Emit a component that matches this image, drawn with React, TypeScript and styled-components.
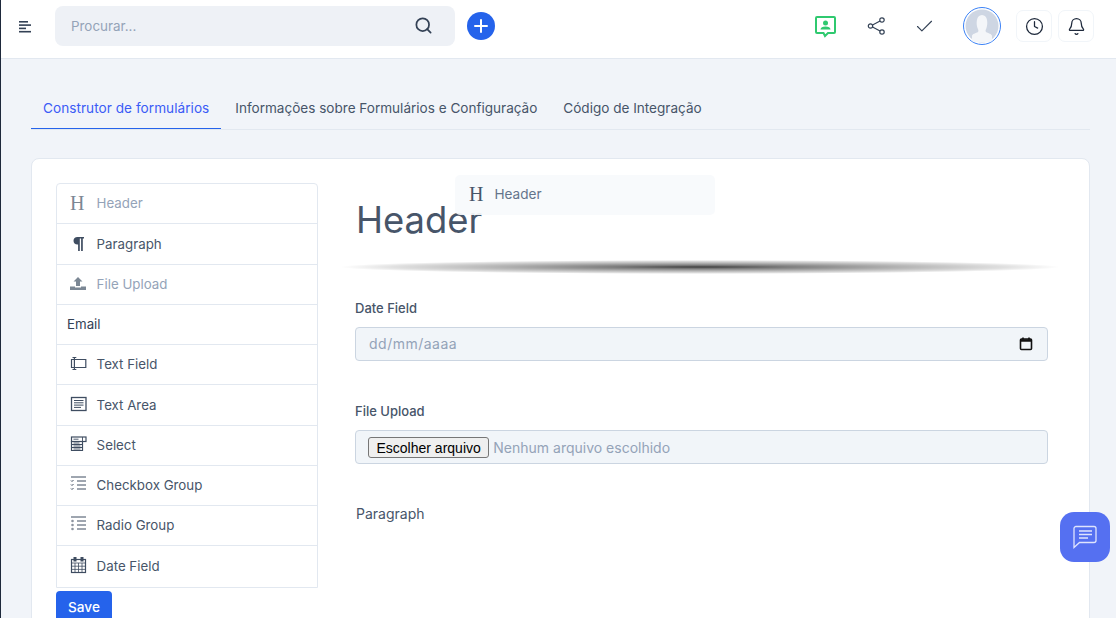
import React from 'react';
import styled, { createGlobalStyle } from 'styled-components';
import { Search, Clock, Bell, Check } from 'lucide-react';

const GlobalStyle = createGlobalStyle`
  html, body, #root { margin: 0; padding: 0; height: 100%; }
  body { font-family: 'Inter', 'Liberation Sans', sans-serif; overflow: hidden; background: #f1f4f9; }
  * { box-sizing: border-box; }
`;

const Shell = styled.div`
  position: relative;
  height: 618px;
  overflow: hidden;
  border-left: 1px solid #1e293b;
  background: #f1f4f9;
`;

const TopBar = styled.header`
  height: 59px;
  display: flex;
  align-items: flex-start;
  background: #fff;
  border-bottom: 1px solid #e2e8f0;
`;

const MenuButton = styled.div`
  width: 54px;
  height: 54px;
  display: flex;
  align-items: center;
  padding-left: 18px;
`;

const SearchBox = styled.div`
  width: 400px;
  height: 40px;
  margin-top: 6px;
  padding: 0 22px 1px 16px;
  display: flex;
  align-items: center;
  justify-content: space-between;
  background: #eef1f6;
  border-radius: 8px;
  font-size: 13.4px;
  color: #94a3b8;
  svg { color: #334155; }
`;

const PlusButton = styled.div`
  width: 28px;
  height: 28px;
  margin: 12px 0 0 12px;
  border-radius: 50%;
  background: #2563eb;
  display: flex;
  align-items: center;
  justify-content: center;
`;

const TopActions = styled.div`
  margin-left: auto;
  display: flex;
  align-items: flex-start;
  padding-right: 22px;
`;

const ActionIcon = styled.div<{ $width: number }>`
  width: ${p => p.$width}px;
  height: 52px;
  display: flex;
  align-items: center;
  justify-content: center;
  color: #334155;
`;

const Avatar = styled.div`
  width: 38px;
  height: 38px;
  margin: 7px 15px 0 13px;
  border-radius: 50%;
  border: 1px solid #3b82f6;
  background: #fff;
  padding: 1px;
  overflow: hidden;
  svg { display: block; }
`;

const ButtonGroup = styled.div`
  display: flex;
  gap: 6px;
  margin-top: 10px;
`;

const SquareButton = styled.div`
  width: 36px;
  height: 32px;
  border: 1px solid #f1f5f9;
  border-radius: 7px;
  background: #fff;
  display: flex;
  align-items: center;
  justify-content: center;
  color: #1e293b;
`;

const Content = styled.main`
  padding: 29px 26px 0 30px;
`;

const Tabs = styled.nav`
  display: flex;
  gap: 2px;
  height: 42px;
  border-bottom: 1px solid #e2e8f0;
`;

const Tab = styled.div<{ $active?: boolean }>`
  height: 41px;
  padding: 0 12px 1px;
  display: flex;
  align-items: center;
  font-size: ${p => (p.$active ? '13.6px' : '13.56px')};
  white-space: nowrap;
  letter-spacing: ${p => (p.$active ? '0.04px' : '0')};
  color: ${p => (p.$active ? '#3b5bf6' : '#475569')};
  border-bottom: 1px solid ${p => (p.$active ? '#2563eb' : 'transparent')};
`;

const Card = styled.section`
  margin-top: 28px;
  padding: 24px 41px 24px 24px;
  display: flex;
  gap: 37px;
  background: #fff;
  border: 1px solid #e2e8f0;
  border-radius: 8px;
  height: 520px;
`;

const Palette = styled.div`
  width: 262px;
  flex: none;
`;

const FieldList = styled.ul`
  list-style: none;
  margin: 0 0 3px;
  padding: 0;
  border: 1px solid #e2e8f0;
  border-radius: 4px 4px 0 0;
`;

const FieldRow = styled.li<{ $muted?: boolean }>`
  height: 40.25px;
  display: flex;
  align-items: center;
  padding: 0 0 0.4px 10px;
  font-size: 13.3px;
  color: ${p => (p.$muted ? '#94a3b8' : '#475569')};
  border-bottom: 1px solid #e2e8f0;
  &:last-child { border-bottom: 0; }
`;

const PlainLabel = styled.span`
  color: #334155;
`;

const IconSlot = styled.span<{ $muted?: boolean }>`
  width: 29.6px;
  height: 18px;
  flex: none;
  display: flex;
  align-items: center;
  padding-left: 3px;
  color: ${p => (p.$muted ? '#7b8794' : '#3f4d61')};
`;

const LetterIcon = styled.span`
  font-family: 'Liberation Serif', serif;
  font-size: 20px;
  line-height: 20px;
`;

const SaveButton = styled.button`
  display: block;
  width: 56px;
  height: 32px;
  border: 0;
  padding: 0;
  border-radius: 4px;
  background: #2563eb;
  color: #fff;
  font: 500 13.6px 'Inter', sans-serif;
`;

const Preview = styled.div`
  flex: 1;
  min-width: 0;
`;

const Heading = styled.h1`
  margin: 15px 0 0;
  padding-left: 1px;
  font-size: 36.4px;
  line-height: 44px;
  font-weight: 400;
  color: #475569;
`;

const Divider = styled.div`
  height: 14px;
  margin: 18px -12px 0 -15px;
  background: radial-gradient(
    ellipse closest-side,
    rgba(0, 0, 0, 0.75) 0%,
    rgba(0, 0, 0, 0.5) 25%,
    rgba(0, 0, 0, 0.3) 55%,
    rgba(0, 0, 0, 0.12) 85%,
    rgba(0, 0, 0, 0) 100%
  );
`;

const FieldLabel = styled.div<{ $top: number }>`
  margin-top: ${p => p.$top}px;
  font-size: 13px;
  line-height: 20px;
  font-weight: 500;
  color: #475569;
`;

const FieldBox = styled.div`
  height: 34px;
  margin-top: 9px;
  border: 1px solid #cbd5e1;
  border-radius: 4px;
  background: #f1f5f9;
  display: flex;
  align-items: center;
  font-size: 14px;
  color: #94a3b8;
`;

const DateBox = styled(FieldBox)`
  justify-content: space-between;
  padding: 0 14px 1px 13px;
  letter-spacing: 0.5px;
`;

const FileBox = styled(FieldBox)`
  padding-left: 12px;
  gap: 4px;
`;

const FakeFileButton = styled.span`
  height: 21px;
  padding: 1px 7.5px 0;
  display: flex;
  align-items: center;
  border: 1px solid #767676;
  border-radius: 3px;
  background: #efefef;
  color: #000;
  font: 14px 'Liberation Sans', sans-serif;
`;

const ParagraphText = styled.p`
  margin: 40px 0 0;
  padding-left: 1px;
  font-size: 14px;
  line-height: 20px;
  color: #475569;
`;

const DragGhost = styled.div`
  position: absolute;
  left: 454px;
  top: 175px;
  width: 260px;
  height: 40px;
  padding: 0 0 3px 14px;
  display: flex;
  align-items: center;
  gap: 11px;
  border-radius: 5px;
  background: rgba(248, 250, 252, 0.93);
  font-size: 13.6px;
  color: #64748b;
`;

const GhostLetter = styled(LetterIcon)`
  color: #475569;
`;

const ChatBubble = styled.div`
  position: absolute;
  left: 1059px;
  top: 512px;
  width: 50px;
  height: 50px;
  border-radius: 14px;
  background: #5570f1;
  display: flex;
  align-items: center;
  justify-content: center;
`;

type FieldItem = { label: string; icon?: React.ReactNode; muted?: boolean };

const strokeIcon = { width: 18, height: 18, viewBox: '0 0 18 18', fill: 'none', stroke: 'currentColor', strokeWidth: 1 };

const fields: FieldItem[] = [
  { label: 'Header', muted: true, icon: <LetterIcon>H</LetterIcon> },
  {
    label: 'Paragraph',
    icon: (
      <svg width="18" height="18" viewBox="0 0 18 18" fill="currentColor">
        <path d="M7.500 2H14v1.500h-1.200V16h-1.700V3.500H9.800V16H8.100V9.500H7.500C5 9.500 3.500 8 3.500 5.800S5 2 7.500 2z" />
      </svg>
    ),
  },
  {
    label: 'File Upload',
    muted: true,
    icon: (
      <svg width="18" height="18" viewBox="0 0 18 18" fill="currentColor">
        <path d="M8 2l4.500 4.500H10V11H6V6.500H3.500zM0 11.500h5v1h6v-1h5V15H0z" />
      </svg>
    ),
  },
  { label: 'Email' },
  {
    label: 'Text Field',
    icon: (
      <svg {...strokeIcon}>
        <path d="M4 4.500H1.500v8H4M4.800 4.500h11v8h-11M4.400 2.500v12M2.500 2.500h3.800M2.500 14.500h3.800" strokeWidth="1.200" />
      </svg>
    ),
  },
  {
    label: 'Text Area',
    icon: (
      <svg {...strokeIcon}>
        <rect x="1.500" y="1.500" width="14.500" height="13" strokeWidth="1.300" />
        <path d="M4 4.500h9.500M4 6.800h9.500M4 9.100h9.500M4 11.400h7" />
      </svg>
    ),
  },
  {
    label: 'Select',
    icon: (
      <svg {...strokeIcon}>
        <path d="M1.500 5.500h11v9h-11zM1.500 8.500h11M1.500 11.500h11" strokeWidth="1.200" />
        <rect x="1.500" y="1" width="14.500" height="4.500" strokeWidth="1.200" />
        <path d="M3.500 3.200h5M3.500 7h6M3.500 10h7M3.500 13h7M12.500 1v4.500" strokeWidth=".9" />
      </svg>
    ),
  },
  {
    label: 'Checkbox Group',
    icon: (
      <svg {...strokeIcon}>
        <path d="M1 1h15M7 5h9M7 9h9M7 13h9M1 4.500l1 1 1.500-1.500M1 8.500l1 1 1.500-1.500M1 12.500l1 1 1.500-1.500" />
      </svg>
    ),
  },
  {
    label: 'Radio Group',
    icon: (
      <svg {...strokeIcon}>
        <path d="M1 1h15M7 5h9M7 9h9M7 13h9" />
        <circle cx="2.500" cy="5" r="1.300" fill="currentColor" fillOpacity=".6" stroke="none" />
        <circle cx="2.500" cy="9" r="1.300" fill="currentColor" fillOpacity=".6" stroke="none" />
        <circle cx="2.500" cy="13" r="1.300" fill="currentColor" fillOpacity=".6" stroke="none" />
      </svg>
    ),
  },
  {
    label: 'Date Field',
    icon: (
      <svg {...strokeIcon}>
        <rect x="1.500" y="2.500" width="14" height="13" strokeWidth="1.200" />
        <path d="M1.500 6h14M1.500 9.200h14M1.500 12.400h14M5 6v9.500M8.500 6v9.500M12 6v9.500" strokeWidth=".8" />
        <rect x="4" y="0.500" width="2" height="3.500" fill="currentColor" />
        <rect x="11" y="0.500" width="2" height="3.500" fill="currentColor" />
      </svg>
    ),
  },
];

const App: React.FC = () => (
  <>
    <GlobalStyle />
    <Shell>
      <TopBar>
        <MenuButton>
          <svg width="13" height="12" viewBox="0 0 13 12" fill="#334155">
            <rect y="0" width="9" height="1.600" />
            <rect y="3.300" width="12" height="1.600" />
            <rect y="6.600" width="7" height="1.600" />
            <rect y="9.900" width="12" height="1.600" />
          </svg>
        </MenuButton>
        <SearchBox>
          Procurar...
          <Search size={19} strokeWidth={2.2} />
        </SearchBox>
        <PlusButton>
          <svg width="14" height="14" viewBox="0 0 14 14" stroke="#fff" strokeWidth="2" strokeLinecap="round">
            <path d="M7 1v12M1 7h12" />
          </svg>
        </PlusButton>
        <TopActions>
          <ActionIcon $width={58}>
            <svg width="22" height="24" viewBox="0 0 22 24" fill="none">
              <path d="M3 3h17a1 1 0 0 1 1 1v14a1 1 0 0 1-1 1h-6l-3 3-1.500-3H3a1 1 0 0 1-1-1V4a1 1 0 0 1 1-1z" stroke="#2fc96f" strokeWidth="2" />
              <circle cx="11.500" cy="9" r="2.500" fill="#2fc96f" />
              <path d="M6.500 15.500c0-2 2-3 5-3s5 1 5 3z" fill="#2fc96f" />
            </svg>
          </ActionIcon>
          <ActionIcon $width={44}>
            <svg width="18" height="18" viewBox="0 0 18 18" fill="none" stroke="currentColor" strokeWidth="1.200">
              <circle cx="3.500" cy="9" r="2.200" />
              <circle cx="15" cy="3" r="2.200" />
              <circle cx="15" cy="15" r="2.200" />
              <path d="M5.500 8l7.600-4M5.500 10l7.600 4" />
            </svg>
          </ActionIcon>
          <ActionIcon $width={52}>
            <Check size={21} strokeWidth={1.300} />
          </ActionIcon>
          <Avatar>
            <svg width="34" height="34" viewBox="0 0 34 34">
              <circle cx="17" cy="17" r="16.500" fill="#ced6e3" />
              <path d="M7 33v-6c0-2 4-3 6-4 1-1 0-3-.5-4-1.500-4-1.500-13 4.500-13s6 9 4.500 13c-.5 1-1.500 3-.5 4 2 1 6 2 6 4v6z" fill="#f4f6f9" />
            </svg>
          </Avatar>
          <ButtonGroup>
            <SquareButton>
              <Clock size={19} strokeWidth={1.600} />
            </SquareButton>
            <SquareButton>
              <Bell size={19} strokeWidth={1.600} />
            </SquareButton>
          </ButtonGroup>
        </TopActions>
      </TopBar>

      <Content>
        <Tabs>
          <Tab $active>Construtor de formulários</Tab>
          <Tab>Informações sobre Formulários e Configuração</Tab>
          <Tab>Código de Integração</Tab>
        </Tabs>

        <Card>
          <Palette>
            <FieldList>
              {fields.map(field => (
                <FieldRow key={field.label} $muted={field.muted}>
                  {field.icon ? <IconSlot $muted={field.muted}>{field.icon}</IconSlot> : null}
                  {field.icon ? field.label : <PlainLabel>{field.label}</PlainLabel>}
                </FieldRow>
              ))}
            </FieldList>
            <SaveButton>Save</SaveButton>
          </Palette>

          <Preview>
            <Heading>Header</Heading>
            <Divider />
            <FieldLabel $top={24}>Date Field</FieldLabel>
            <DateBox>
              dd/mm/aaaa
              <svg width="14" height="14" viewBox="0 0 14 14" fill="none" stroke="#111" strokeWidth="1.600">
                <rect x="1.500" y="2" width="11" height="10.500" rx="1" />
                <path d="M1.500 3.500h11" strokeWidth="2.500" />
                <path d="M4 .5v2M10 .5v2" />
              </svg>
            </DateBox>
            <FieldLabel $top={40}>File Upload</FieldLabel>
            <FileBox>
              <FakeFileButton>Escolher arquivo</FakeFileButton>
              Nenhum arquivo escolhido
            </FileBox>
            <ParagraphText>Paragraph</ParagraphText>
          </Preview>
        </Card>
      </Content>

      <DragGhost>
        <GhostLetter>H</GhostLetter>
        Header
      </DragGhost>

      <ChatBubble>
        <svg width="28" height="28" viewBox="0 0 28 28" fill="none" stroke="#dfe4fd" strokeWidth="1.300">
          <path d="M3 24.500V5.500a2 2 0 0 1 2-2h18a2 2 0 0 1 2 2v12a2 2 0 0 1-2 2H8.500z" />
          <path d="M8 8h13M8 11.500h13M8 15h9" />
        </svg>
      </ChatBubble>
    </Shell>
  </>
);

export default App;
